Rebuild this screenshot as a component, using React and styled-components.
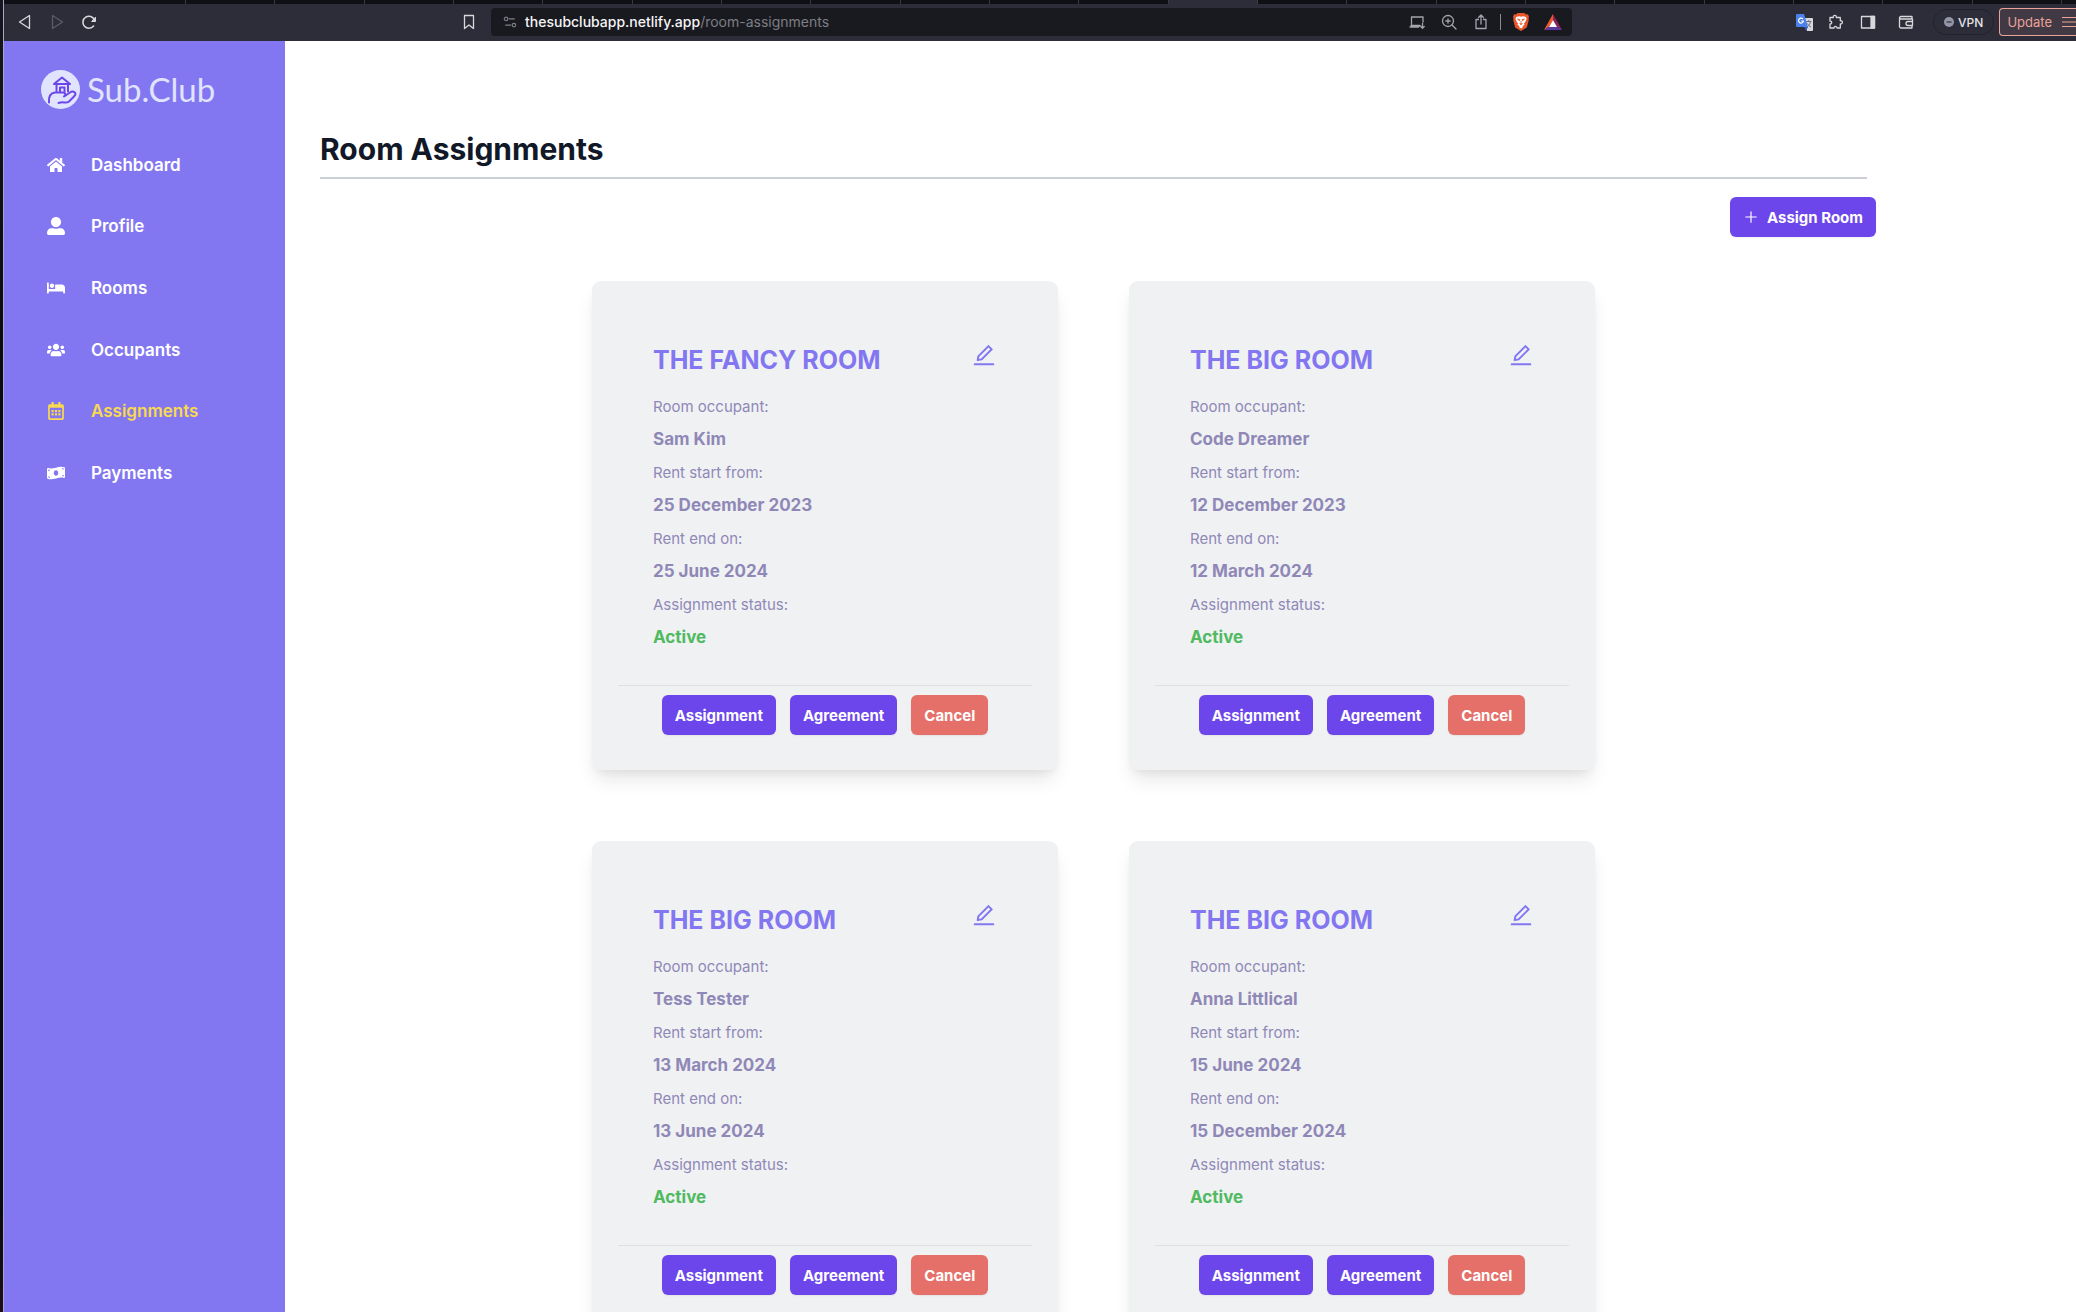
import React from 'react';
import styled, { createGlobalStyle } from 'styled-components';
import { FaHome, FaUserAlt, FaBed, FaUsers, FaRegCalendarAlt, FaMoneyBillWave } from 'react-icons/fa';
import { AiOutlineEdit, AiOutlinePlus } from 'react-icons/ai';

const sans = `Inter, "Liberation Sans", sans-serif`;

const GlobalStyle = createGlobalStyle`
  *, *::before, *::after { box-sizing: border-box; }
  html, body { margin: 0; background: #fff; }
  body { font-family: ${sans}; color: #111827; overflow: hidden; }
  h1, h2, p, dl, dt, dd, ul { margin: 0; padding: 0; }
  button { font-family: inherit; border: 0; margin: 0; cursor: pointer; }
  svg { display: block; flex: none; }
`;

const Screen = styled.div`
  display: flex;
  height: 100vh;
  overflow: hidden;
`;

const DesktopEdge = styled.div`
  flex: none;
  width: 4px;
  background: linear-gradient(#17171b, #0b0b0d 30%, #0b0b0d 92%, #1c0f16);
  border-right: 1px solid #a9a4d8;
`;

const Browser = styled.div`
  flex: 1;
  min-width: 0;
  display: flex;
  flex-direction: column;
`;

const TabStrip = styled.div`
  flex: none;
  height: 4px;
  display: flex;
  background: #0f1016;
`;

const Tab = styled.div`
  flex: 1 1 0;
  border-right: 1px solid #3a3a42;
  background: ${(p) => (p.$active ? '#2d2d3a' : 'transparent')};
  &:first-child { flex: 0 0 182px; }
  &:last-child { flex: 0 0 14px; border-right: 0; }
`;

const Toolbar = styled.div`
  flex: none;
  height: 37px;
  display: flex;
  align-items: center;
  padding-bottom: 1px;
  overflow: hidden;
  background: #2d2d3a;
  color: #d8d8dc;
`;

const IconButton = styled.button`
  flex: none;
  display: grid;
  place-items: center;
  width: 32px;
  height: 28px;
  padding: 0;
  background: none;
  color: ${(p) => (p.$dim ? '#5c5c69' : 'inherit')};
`;

const History = styled.div`
  display: flex;
  flex: 0 0 449px;
  padding-left: 5px;
`;

const AddressBar = styled.div`
  flex: 1;
  min-width: 0;
  height: 28px;
  margin-left: 6px;
  display: flex;
  align-items: center;
  padding: 0 3px 0 8px;
  border-radius: 4px;
  background: #191a20;
  color: #a4a4aa;
`;

const Address = styled.button`
  flex: 1;
  display: flex;
  align-items: center;
  gap: 8px;
  padding: 0 4px;
  background: none;
  color: #7d7e84;
  font-size: 14px;
  line-height: 20px;
  text-align: left;
`;

const Host = styled.span`
  color: #f4f4f6;
  font-weight: 500;
`;

const Divider = styled.span`
  width: 1px;
  height: 16px;
  margin: 0 4px 0 3px;
  background: #8a8a90;
`;

const Extensions = styled.div`
  flex: 0 0 504px;
  display: flex;
  align-items: center;
  justify-content: flex-end;
`;

const ExtensionGroup = styled.div`
  display: flex;
  margin-right: 6px;
`;

const VpnButton = styled.button`
  flex: none;
  display: flex;
  align-items: center;
  gap: 4px;
  height: 26px;
  margin: 0 5px 0 11px;
  padding: 0 10px;
  border: 1px solid #22222c;
  border-radius: 13px;
  background: none;
  color: #e4e4e8;
  font-size: 12px;
  font-weight: 500;
`;

const UpdateButton = styled.button`
  flex: none;
  display: flex;
  align-items: center;
  gap: 9px;
  height: 28px;
  padding: 0 0 0 7px;
  border: 1px solid #eba298;
  border-right: 0;
  border-radius: 4px 0 0 4px;
  background: #413a45;
  color: #eba298;
  font-size: 13px;
`;

const Page = styled.div`
  flex: 1;
  min-height: 0;
  display: flex;
`;

const Sidebar = styled.aside`
  flex: none;
  width: 281px;
  background: #8377f1;
`;

const Brand = styled.a`
  display: flex;
  align-items: center;
  gap: 7px;
  height: 96px;
  padding-left: 37px;
  color: #e0e4ff;
  font-family: Lato, ${sans};
  font-size: 33px;
  line-height: 40px;
  text-decoration: none;
`;

const Nav = styled.nav`
  height: 370px;
  margin-top: -3px;
  display: grid;
  grid-auto-rows: 1fr;
`;

const NavLink = styled.a`
  display: flex;
  align-items: center;
  gap: 26px;
  padding-left: 43px;
  color: ${(p) => (p.$active ? '#f8d94f' : '#fff')};
  font-size: 17px;
  font-weight: 600;
  text-decoration: none;
`;

const Main = styled.main`
  flex: 1;
  min-width: 0;
  padding: 86px 209px 0 35px;
`;

const PageTitle = styled.h1`
  padding-bottom: 5px;
  border-bottom: 2px solid #cccfd6;
  font-size: 30px;
  font-weight: 700;
  line-height: 45px;
`;

const Actions = styled.div`
  display: flex;
  justify-content: flex-end;
  margin: 18px -9px 44px 0;
`;

const Button = styled.button`
  display: flex;
  align-items: center;
  gap: 8px;
  height: 40px;
  padding: 0 13px;
  border-radius: 6px;
  background: ${(p) => (p.$danger ? '#e57069' : '#6c46ea')};
  color: #fff;
  font-size: 15px;
  font-weight: 700;
  box-shadow: 0 1px 2px rgba(0, 0, 0, 0.06);
`;

const Cards = styled.div`
  display: grid;
  grid-template-columns: repeat(auto-fit, 466px);
  justify-content: center;
  gap: 71px;
  max-width: 1100px;
  margin: 0 auto;
`;

const Card = styled.article`
  padding: 59px 26px 35px;
  border-radius: 9px;
  background: #f0f1f3;
  box-shadow: 0 13px 20px -4px rgba(0, 0, 0, 0.1), 0 5px 8px -3px rgba(0, 0, 0, 0.06);
`;

const CardHeader = styled.header`
  display: flex;
  justify-content: space-between;
  padding: 0 35px;
`;

const RoomName = styled.h2`
  color: #8377f1;
  font-size: 25px;
  font-weight: 700;
  line-height: 40px;
`;

const EditButton = styled.button`
  display: grid;
  align-items: start;
  padding: 2px 0 0;
  background: none;
  color: #8377f1;
`;

const Details = styled.dl`
  && { padding: 11px 35px 30px; }
  border-bottom: 1px solid #dfe0e4;
  color: #8f88b7;
  line-height: 32px;
`;

const Label = styled.dt`
  font-size: 15px;
`;

const Value = styled.dd`
  && { margin-bottom: 2px; }
  color: ${(p) => (p.$active ? '#4fba5f' : 'inherit')};
  font-size: 17px;
  font-weight: 700;
`;

const CardActions = styled.footer`
  display: flex;
  justify-content: center;
  gap: 14px;
  padding-top: 9px;
`;

const Line = ({ size = 16, w = 1.3, children, ...rest }) => (
  <svg width={size} height={size} viewBox="0 0 16 16" fill="none" stroke="currentColor" strokeWidth={w} strokeLinejoin="round" strokeLinecap="round" aria-hidden="true" {...rest}>
    {children}
  </svg>
);

const LogoMark = () => (
  <svg width="39" height="39" viewBox="0 0 39 39" fill="none" aria-hidden="true">
    <circle cx="19.500" cy="19.500" r="19.500" fill="#e0e4ff" />
    <g stroke="#6c46ea" strokeWidth="2" strokeLinecap="round" strokeLinejoin="round">
      <path d="M13 14 21 7.500l8 6.500zM15.500 14.500v6.500M27 14.500v7M19 21.500v-4h4.500v4" />
      <path d="M8 32.500c-.5-6 2-9.500 6-10 3-.3 5 0 8 0 2.500 0 3.200 2.500 1.500 3.500" />
      <path d="M23 26.500l6-4c2.500-2 5.500-.5 5.500 1.500 0 1-1 2-2 3l-4.500 4.500c-1.500 1.200-3 1.300-5 1-2-.3-4 0-5.500.5" />
    </g>
  </svg>
);

const Brave = () => (
  <svg width="16" height="18" viewBox="0 0 16 18" aria-hidden="true">
    <path d="M4.500 0h7l1.500 1.500 2-.2 1 2.700-.5 1.500.3 1.500-2 7.500L8 18l-5.800-3.500L.2 7l.3-1.500L0 4l1-2.700 2 .2z" fill="#e8562a" />
    <path d="M3 4l3-.8 2 .6 2-.6 3 .8.500 2-1 2.500-1.500 2 .5 1.500-2 1 .5 1L8 15.500 6 14l.5-1-2-1 .5-1.500-1.500-2-1-2.500z" fill="#fff" />
    <path d="M4.500 6l2.500.7-.5 1zM11.500 6 9 6.700l.5 1zM8 8v3M6.500 10.500 8 11.700l1.500-1.200" stroke="#e8562a" strokeWidth=".8" fill="#e8562a" />
  </svg>
);

const Bat = () => (
  <svg width="18" height="16" viewBox="0 0 18 16" aria-hidden="true">
    <path d="M9 0 0 16l5-3 4-7z" fill="#f2592a" />
    <path d="M9 0l9 16-5-3-4-7z" fill="#8e2158" />
    <path d="M0 16h18l-5-3.500H5z" fill="#5a3a9c" />
    <path d="M9 6l4 7H5z" fill="#fff" />
  </svg>
);

const Translate = () => (
  <svg width="17" height="17" viewBox="0 0 17 17" aria-hidden="true">
    <path d="M7 4h9a1 1 0 0 1 1 1v11a1 1 0 0 1-1 1h-5z" fill="#d5d7dc" />
    <path d="M10 7.500h5.500M12.800 6v1.500M14.500 7.500c-.5 2.500-1.500 4-3.500 5.500M11.500 9.500c.8 1.700 2 2.800 3.500 3.500" stroke="#6d7380" fill="none" />
    <path d="M1 0h7l4 13H1a1 1 0 0 1-1-1V1a1 1 0 0 1 1-1z" fill="#4a80ea" />
    <path d="M8 13h4l-2 3.500z" fill="#3158b8" />
    <path d="M7 5a2.500 2.500 0 1 0 .5 2H5.200" stroke="#fff" strokeWidth="1.200" fill="none" />
  </svg>
);

const navItems = [
  { label: 'Dashboard', icon: FaHome },
  { label: 'Profile', icon: FaUserAlt },
  { label: 'Rooms', icon: FaBed },
  { label: 'Occupants', icon: FaUsers },
  { label: 'Assignments', icon: FaRegCalendarAlt, active: true },
  { label: 'Payments', icon: FaMoneyBillWave },
];

const assignments = [
  { id: 1, room: 'THE FANCY ROOM', occupant: 'Sam Kim', start: '25 December 2023', end: '25 June 2024' },
  { id: 2, room: 'THE BIG ROOM', occupant: 'Code Dreamer', start: '12 December 2023', end: '12 March 2024' },
  { id: 3, room: 'THE BIG ROOM', occupant: 'Tess Tester', start: '13 March 2024', end: '13 June 2024' },
  { id: 4, room: 'THE BIG ROOM', occupant: 'Anna Littlical', start: '15 June 2024', end: '15 December 2024' },
];

const AssignmentCard = ({ room, occupant, start, end }) => (
  <Card>
    <CardHeader>
      <RoomName>{room}</RoomName>
      <EditButton aria-label="Edit assignment"><AiOutlineEdit size={26} /></EditButton>
    </CardHeader>
    <Details>
      <Label>Room occupant:</Label>
      <Value>{occupant}</Value>
      <Label>Rent start from:</Label>
      <Value>{start}</Value>
      <Label>Rent end on:</Label>
      <Value>{end}</Value>
      <Label>Assignment status:</Label>
      <Value $active>Active</Value>
    </Details>
    <CardActions>
      <Button>Assignment</Button>
      <Button>Agreement</Button>
      <Button $danger>Cancel</Button>
    </CardActions>
  </Card>
);

export default function App() {
  return (
    <Screen>
      <GlobalStyle />
      <DesktopEdge />
      <Browser>
        <TabStrip>
          {Array.from({ length: 23 }, (_, i) => <Tab key={i} $active={i === 12} />)}
        </TabStrip>
        <Toolbar>
          <History>
            <IconButton aria-label="Back"><Line><path d="M12.500 1.500v13L2.500 8z" /></Line></IconButton>
            <IconButton aria-label="Forward" $dim><Line><path d="M3.500 1.500v13L13.500 8z" /></Line></IconButton>
            <IconButton aria-label="Reload"><Line w={1.6}><path d="M12.600 12A6 6 0 1 1 13.500 6" /><path d="M14.500 3.500v4h-3.500z" fill="currentColor" strokeWidth="1" /></Line></IconButton>
          </History>
          <IconButton aria-label="Bookmark"><Line><path d="M3.500 1.500h9v13L8 11l-4.500 3.500z" /></Line></IconButton>
          <AddressBar>
            <Address>
              <Line size={14}><circle cx="3.500" cy="4.500" r="2" /><path d="M7 4.500h6M3 11.500h6" /><circle cx="12.500" cy="11.500" r="2" /></Line>
              <span><Host>thesubclubapp.netlify.app</Host>/room-assignments</span>
            </Address>
            <IconButton aria-label="Install app"><Line><path d="M14 8V3H2.500v8.500M1 13h8.500l1.500-1.500H2M13.500 9.500v4.500M11.800 12.500l1.700 1.700 1.700-1.700" /></Line></IconButton>
            <IconButton aria-label="Zoom"><Line><circle cx="7" cy="7" r="5.500" /><path d="M11 11l4 4M4.800 7h4.400M7 4.800v4.400" /></Line></IconButton>
            <IconButton aria-label="Share"><Line><path d="M5.500 5.500H3v9h10v-9h-2.500M8 10V1M5.500 3.500 8 1l2.500 2.500" /></Line></IconButton>
            <Divider />
            <IconButton aria-label="Brave Shields"><Brave /></IconButton>
            <IconButton aria-label="Brave Rewards"><Bat /></IconButton>
          </AddressBar>
          <Extensions>
            <ExtensionGroup>
              <IconButton aria-label="Translate"><Translate /></IconButton>
              <IconButton aria-label="Extensions"><Line><path d="M2 3.500h3.300c-.6-2.800 3.600-2.800 3 0h4v3.300c2.800-.6 2.800 3.600 0 3v4.200H9c.3-2-3.300-2-3 0H2v-4c2.300.2 2.300-3 0-2.800z" /></Line></IconButton>
              <IconButton aria-label="Side panel"><Line><path d="M1.500 2.500h13v11.500h-13z" /><path d="M11 2.500h3.500V14H11z" fill="currentColor" /></Line></IconButton>
            </ExtensionGroup>
            <IconButton aria-label="Wallet"><Line><path d="M14 5V2.500H3a1.500 1.500 0 0 0-1.500 1.500v8.500A1.500 1.500 0 0 0 3 14h11v-2.500M2 5h12.500v6.500H10a2 2 0 0 1 0-4h4.500" /></Line></IconButton>
            <VpnButton>
              <svg width="10" height="10" viewBox="0 0 10 10" aria-hidden="true"><circle cx="5" cy="5" r="5" fill="#9495a8" /><path d="M2.500 5h5" stroke="#2d2d3a" strokeWidth="1.200" /></svg>
              VPN
            </VpnButton>
            <UpdateButton>
              Update
              <svg width="15" height="12" viewBox="0 0 15 12" stroke="currentColor" strokeWidth="1.200" aria-hidden="true"><path d="M1 1.500h14M1 6h14M1 10.500h14" /></svg>
            </UpdateButton>
          </Extensions>
        </Toolbar>
        <Page>
          <Sidebar>
            <Brand href="#"><LogoMark />Sub.Club</Brand>
            <Nav>
              {navItems.map(({ label, icon: Icon, active }) => (
                <NavLink key={label} href="#" $active={active}>
                  <Icon size={18} />
                  {label}
                </NavLink>
              ))}
            </Nav>
          </Sidebar>
          <Main>
            <PageTitle>Room Assignments</PageTitle>
            <Actions>
              <Button><AiOutlinePlus size={16} />Assign Room</Button>
            </Actions>
            <Cards>
              {assignments.map((a) => <AssignmentCard key={a.id} {...a} />)}
            </Cards>
          </Main>
        </Page>
      </Browser>
    </Screen>
  );
}
